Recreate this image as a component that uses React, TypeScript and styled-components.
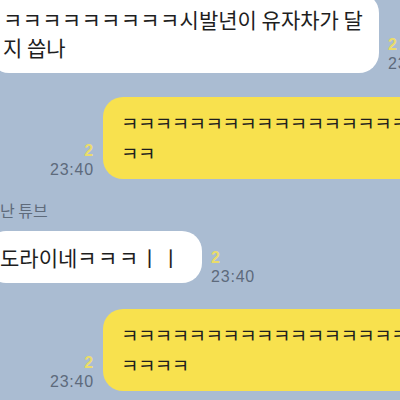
import React from "react";
import styled, { createGlobalStyle } from "styled-components";

const Global = createGlobalStyle`
  html, body { margin: 0; padding: 0; background: #aabcd2; }
  body { font-family: "Noto Sans CJK KR", "Noto Sans", sans-serif; }
`;

const Page = styled.div`
  width: 400px;
  height: 400px;
  overflow: hidden;
  background: #aabcd2;
  display: flex;
  flex-direction: column;
`;

const Row = styled.div<{ $mt: number }>`
  display: flex;
  align-items: flex-end;
  gap: 9px;
  margin-top: ${(p) => p.$mt}px;
  flex: none;
`;

const Bubble = styled.div<{ $tone: "white" | "yellow"; $w: number; $ml?: number }>`
  box-sizing: border-box;
  flex: none;
  width: ${(p) => p.$w}px;
  margin-left: ${(p) => p.$ml ?? 0}px;
  background: ${(p) => (p.$tone === "white" ? "#ffffff" : "#f8e14e")};
  border-radius: 20px;
  color: #1e1e1e;
  font-family: "Noto Sans CJK KR", sans-serif;
  white-space: nowrap;
  ${(p) =>
    p.$tone === "white"
      ? `font-size: 21px; line-height: 28px; padding: 12px 14px 12px 14px;`
      : `font-size: 19px; line-height: 30px; padding: 11px 17px 11px 18px;`}
`;

const TextLine = styled.div`
  white-space: nowrap;
`;

const Ks = styled.span<{ $ls: number }>`
  letter-spacing: ${(p) => p.$ls}px;
`;

const Meta = styled.div<{ $right?: boolean; $w?: number; $drop?: number }>`
  display: flex;
  flex-direction: column;
  align-items: ${(p) => (p.$right ? "flex-end" : "flex-start")};
  ${(p) => (p.$w ? `width: ${p.$w}px;` : "")}
  flex: none;
  font-family: "Liberation Sans", Arial, sans-serif;
  font-size: 16px;
  line-height: 19px;
  letter-spacing: 0.8px;
  margin-bottom: ${(p) => -(p.$drop ?? 0)}px;
`;

const Unread = styled.span`
  color: #eadc6a;
  font-weight: 700;
`;

const Time = styled.span`
  color: #5d6a7c;
`;

const Name = styled.div`
  margin-top: 21px;
  font-size: 16px;
  line-height: 20px;
  color: #5f6b7b;
  font-family: "Noto Sans CJK KR", sans-serif;
  white-space: nowrap;
  flex: none;
`;

export default function App() {
  return (
    <>
      <Global />
      <Page>
        <Row $mt={-7}>
          <Bubble $tone="white" $w={390} $ml={-11}>
            <TextLine>
              <Ks $ls={0.3}>ㅋㅋㅋㅋㅋㅋㅋㅋㅋ</Ks>시발년이 유자차가 달
            </TextLine>
            <TextLine>지 씁나</TextLine>
          </Bubble>
          <Meta>
            <Unread>2</Unread>
            <Time>23:40</Time>
          </Meta>
        </Row>

        <Row $mt={24}>
          <Meta $right $w={94}>
            <Unread>2</Unread>
            <Time>23:40</Time>
          </Meta>
          <Bubble $tone="yellow" $w={340}>
            <TextLine>
              <Ks $ls={-0.6}>ㅋㅋㅋㅋㅋㅋㅋㅋㅋㅋㅋㅋㅋㅋㅋㅋㅋㅋㅋㅋ</Ks>
            </TextLine>
            <TextLine>
              <Ks $ls={-0.6}>ㅋㅋ</Ks>
            </TextLine>
          </Bubble>
        </Row>

        <Name>난 튜브</Name>

        <Row $mt={11}>
          <Bubble $tone="white" $w={216} $ml={-14}>
            <TextLine>
              도라이네<Ks $ls={1.5}>ㅋㅋㅋ</Ks>
              <Ks $ls={2}>ㅣㅣ</Ks>
            </TextLine>
          </Bubble>
          <Meta $drop={3}>
            <Unread>2</Unread>
            <Time>23:40</Time>
          </Meta>
        </Row>

        <Row $mt={26}>
          <Meta $right $w={94}>
            <Unread>2</Unread>
            <Time>23:40</Time>
          </Meta>
          <Bubble $tone="yellow" $w={340}>
            <TextLine>
              <Ks $ls={-0.6}>ㅋㅋㅋㅋㅋㅋㅋㅋㅋㅋㅋㅋㅋㅋㅋㅋㅋㅋㅋㅋ</Ks>
            </TextLine>
            <TextLine>
              <Ks $ls={-0.6}>ㅋㅋㅋㅋ</Ks>
            </TextLine>
          </Bubble>
        </Row>
      </Page>
    </>
  );
}
